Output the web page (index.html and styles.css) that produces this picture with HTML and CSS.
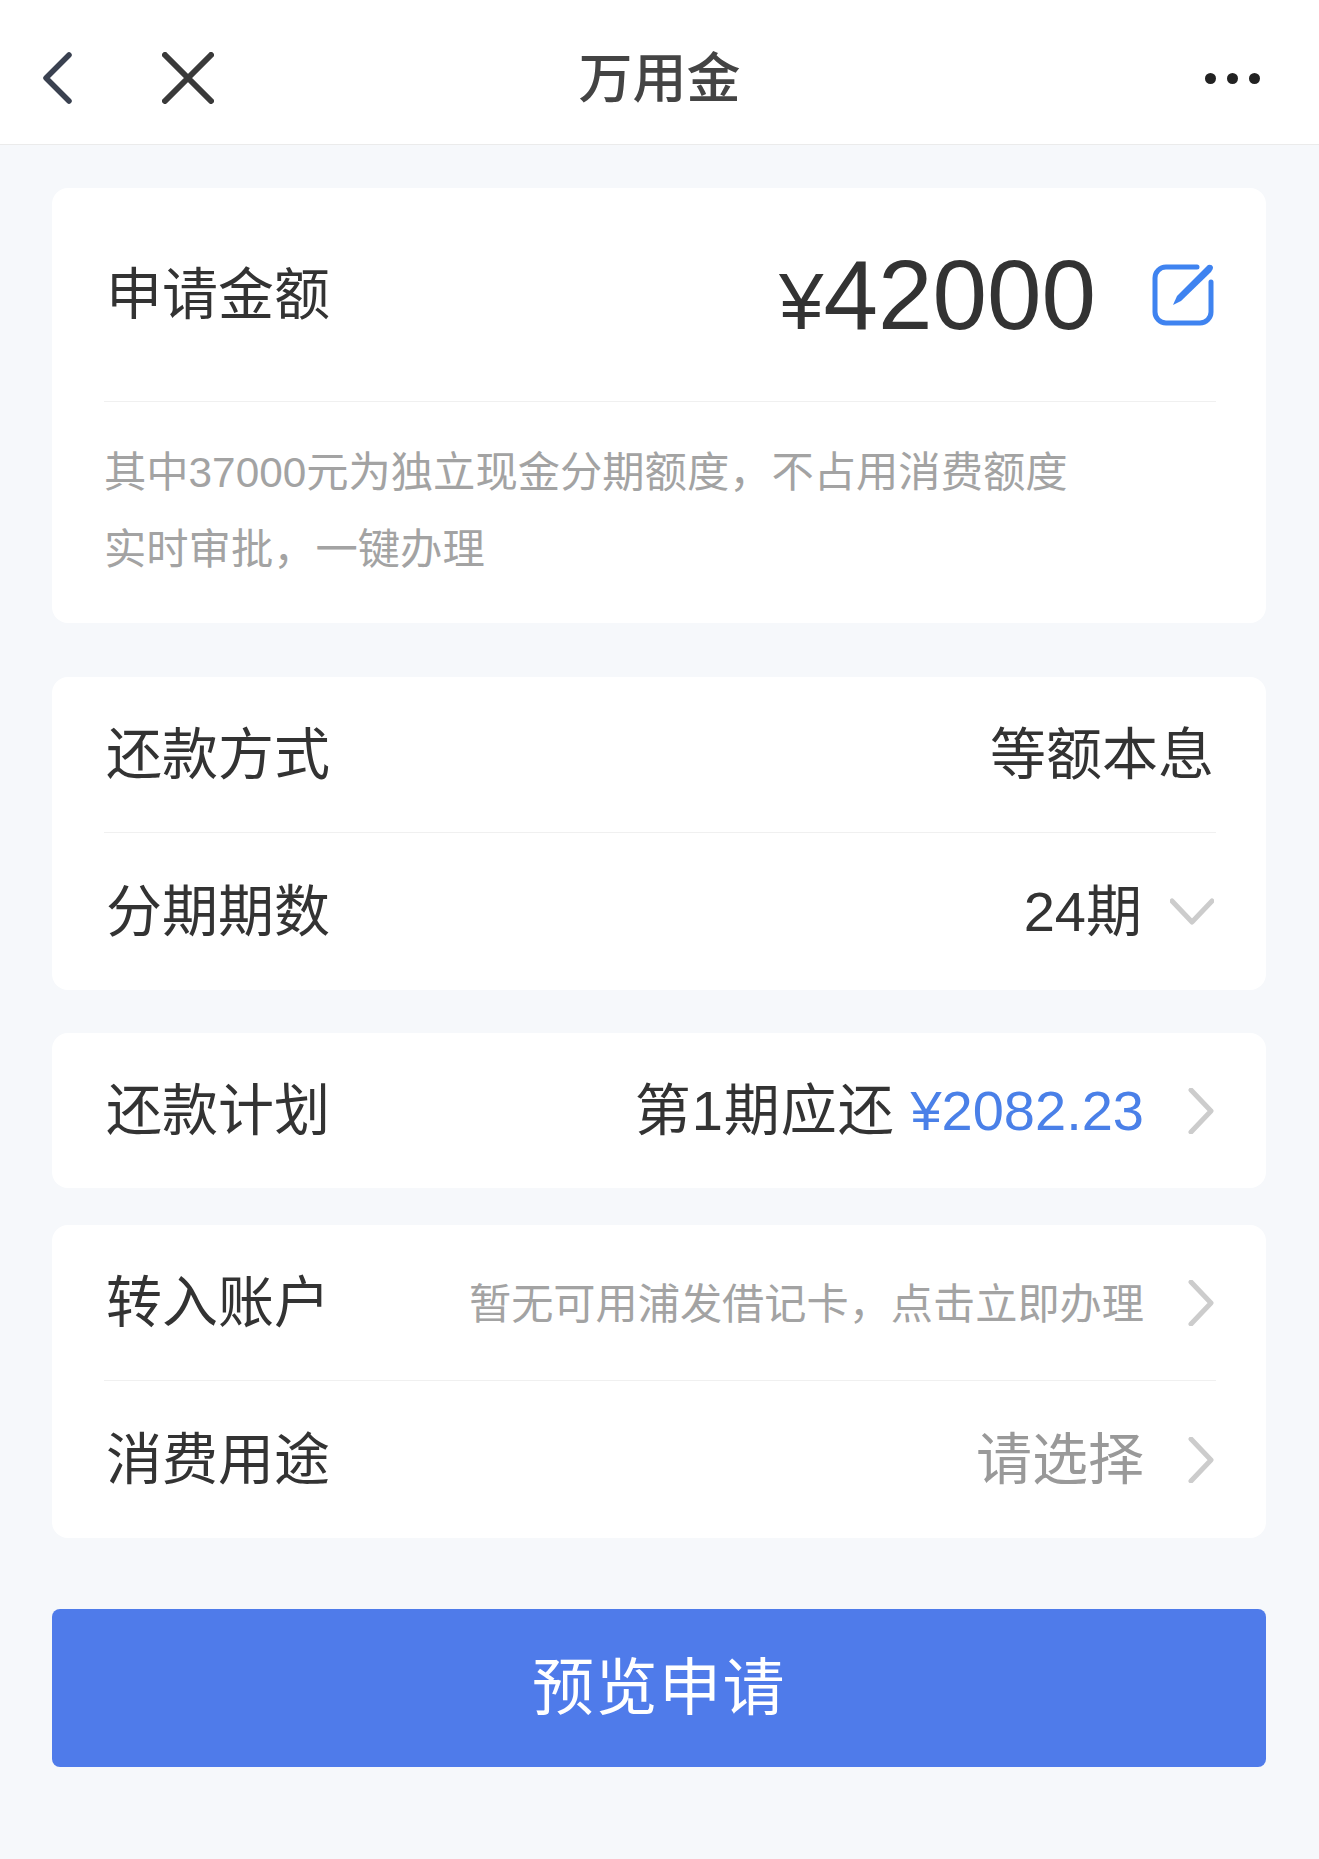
FILE: index.html
```html
<!DOCTYPE html>
<html>
<head>
  <meta charset="utf-8">
  <link rel="stylesheet" href="styles.css">
</head>
<body>

<header class="topbar">
  <div class="topbar-left">
    <svg class="icon-back" viewBox="0 0 30 52"><path d="M27 3 L4 26 L27 49"/></svg>
    <svg class="icon-close" viewBox="0 0 52 52"><path d="M3 3 L49 49 M49 3 L3 49"/></svg>
  </div>
  <h1 class="title">万用金</h1>
  <div class="topbar-right">
    <span class="dot"></span><span class="dot"></span><span class="dot"></span>
  </div>
</header>

<main class="content">
  <!-- amount -->
  <section class="card card-amount">
    <div class="amount-row">
      <span class="label">申请金额</span>
      <div class="amount-right">
        <span class="amount"><span class="yen">¥</span>42000</span>
        <svg class="icon-edit" viewBox="0 0 62 62">
          <path class="edit-box" d="M45 3 H14 a11 11 0 0 0 -11 11 V48 a11 11 0 0 0 11 11 H48 a11 11 0 0 0 11 -11 V18"/>
          <path class="edit-pen" d="M56 1 Q60 0 61 3 Q61.500 5 59 8 L29 37 L21 41 L25 32 Z"/>
        </svg>
      </div>
    </div>
    <div class="note">
      <p>其中37000元为独立现金分期额度，不占用消费额度</p>
      <p>实时审批，一键办理</p>
    </div>
  </section>

  <section class="card card-terms">
    <div class="row row-first">
      <span class="label">还款方式</span>
      <span class="value">等额本息</span>
    </div>
    <div class="row">
      <span class="label">分期期数</span>
      <div class="row-right">
        <span class="value">24期</span>
        <svg class="icon-down" viewBox="0 0 44 28"><path d="M2 3 L22 24 L42 3"/></svg>
      </div>
    </div>
  </section>

  <section class="card card-plan">
    <div class="row row-single">
      <span class="label">还款计划</span>
      <div class="row-right">
        <span class="value"><span class="plan-text">第1期应还</span> <span class="blue">¥2082.23</span></span>
        <svg class="icon-right" viewBox="0 0 26 46"><path d="M3 2 L23 23 L3 44"/></svg>
      </div>
    </div>
  </section>

  <section class="card card-account">
    <div class="row row-first">
      <span class="label">转入账户</span>
      <div class="row-right">
        <span class="hint">暂无可用浦发借记卡，点击立即办理</span>
        <svg class="icon-right" viewBox="0 0 26 46"><path d="M3 2 L23 23 L3 44"/></svg>
      </div>
    </div>
    <div class="row">
      <span class="label">消费用途</span>
      <div class="row-right">
        <span class="value gray">请选择</span>
        <svg class="icon-right" viewBox="0 0 26 46"><path d="M3 2 L23 23 L3 44"/></svg>
      </div>
    </div>
  </section>

  <button class="submit">预览申请</button>
</main>

</body>
</html>
```

FILE: styles.css
```css
* {
  box-sizing: border-box;
}

html, body {
  margin: 0;
  background-color: #f6f8fb;
}

body {
  font-family: "Liberation Sans", "Noto Sans CJK SC", sans-serif;
  color: #333;
  min-height: 1859px;
}

/* Top bar */
.topbar {
  display: grid;
  grid-template-columns: 1fr auto 1fr;
  align-items: center;
  height: 145px;
  background-color: #fff;
  border-bottom: 1px solid #ebebeb;
}

.topbar-left {
  display: flex;
  align-items: center;
  gap: 90px;
  padding-left: 42px;
  padding-top: 12px;
}

.topbar-right {
  display: flex;
  justify-content: flex-end;
  gap: 11px;
  padding-right: 59px;
  padding-top: 12px;
}

.title {
  margin: 0;
  padding-top: 4px;
  font-size: 54px;
  font-weight: 500;
  color: #444;
}

.dot {
  width: 11px;
  height: 11px;
  border-radius: 50%;
  background-color: #222;
}

svg {
  display: block;
  fill: none;
  stroke-linecap: round;
  stroke-linejoin: round;
}

.icon-back {
  width: 30px;
  height: 52px;
  stroke: #3a4150;
  stroke-width: 5.500;
}

.icon-close {
  width: 52px;
  height: 52px;
  stroke: #3a3a3a;
  stroke-width: 6;
}

/* Cards */
.content {
  padding: 43px 53px 0 52px;
}

.card {
  background-color: #fff;
  border-radius: 16px;
  padding: 0 50px 0 52px;
}

.card-terms {
  margin-top: 54px;
}

.card-plan {
  margin-top: 43px;
}

.card-account {
  margin-top: 37px;
}

.amount-row {
  display: flex;
  justify-content: space-between;
  align-items: center;
  height: 214px;
  border-bottom: 1px solid #f0f0f0;
}

.amount-right {
  display: flex;
  align-items: center;
  gap: 56px;
  padding-right: 2px;
}

.amount {
  font-size: 98px;
  line-height: 1;
  color: #333;
}

.yen {
  font-size: 80px;
}

.icon-edit {
  width: 62px;
  height: 62px;
  overflow: visible;
}

.edit-box {
  stroke: #3f83f0;
  stroke-width: 5;
}

.edit-pen {
  fill: #3f83f0;
}

.note {
  padding: 32px 0 35px;
  font-size: 42.300px;
  line-height: 77px;
  color: #a3a3a3;
}

.note p {
  margin: 0;
}

.row {
  display: flex;
  justify-content: space-between;
  align-items: center;
  height: 157px;
}

.row-first {
  height: 156px;
  border-bottom: 1px solid #f0f0f0;
}

.row-single {
  height: 155px;
}

/* the CJK glyphs sit low in the line box, lift them a bit */
.label,
.value {
  padding-bottom: 10px;
  font-size: 56px;
  white-space: nowrap;
}

.label {
  padding-left: 2px;
}

.row-first > .value {
  padding-right: 2px;
}

.row-right {
  display: flex;
  align-items: center;
  gap: 28px;
  padding-right: 2px;
}

.plan-text {
  letter-spacing: 1px;
}

.hint {
  padding-bottom: 4px;
  font-size: 42.200px;
  color: #a3a3a3;
}

.gray {
  color: #999;
}

.blue {
  color: #4a80e8;
}

.icon-down {
  width: 44px;
  height: 28px;
  stroke: #ccc;
  stroke-width: 5;
}

.icon-right {
  width: 26px;
  height: 46px;
  margin-left: 16px;
  stroke: #ccc;
  stroke-width: 5;
}

/* Submit button */
.submit {
  display: block;
  width: 100%;
  height: 158px;
  margin-top: 71px;
  padding: 0 0 10px;
  border: none;
  border-radius: 8px;
  background-color: #4f7bea;
  color: #fff;
  font-family: inherit;
  font-size: 62px;
  letter-spacing: 1.500px;
  cursor: pointer;
}
```
